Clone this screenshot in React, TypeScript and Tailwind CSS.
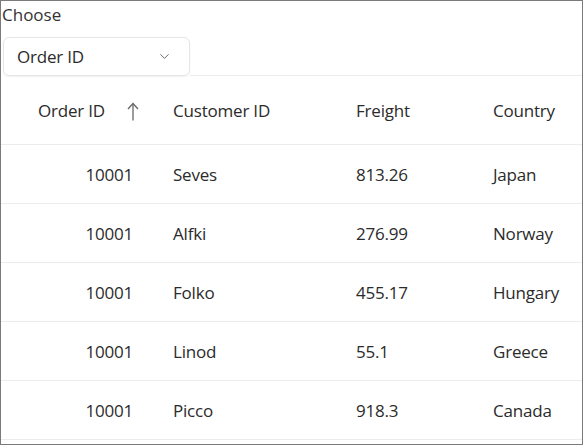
import { ChevronDown } from "lucide-react";

const rows = [
  { id: "10001", customer: "Seves", freight: "813.26", country: "Japan" },
  { id: "10001", customer: "Alfki", freight: "276.99", country: "Norway" },
  { id: "10001", customer: "Folko", freight: "455.17", country: "Hungary" },
  { id: "10001", customer: "Linod", freight: "55.1", country: "Greece" },
  { id: "10001", customer: "Picco", freight: "918.3", country: "Canada" },
];

const cols = "grid grid-cols-[155px_183px_137px_1fr]";

const App = () => {
  return (
    <div
      className="w-[583px] h-[445px] bg-white border border-[#7a7a7a] overflow-hidden text-[#2b2b2b]"
      style={{ fontFamily: '"Segoe UI", "Open Sans", sans-serif' }}
    >
      <div className="pl-[1px] pt-[2px] text-[17px] leading-[24px] text-[#333]">Choose</div>
      <div className="flex items-end">
        <div className="ml-[2px] mt-[10px] w-[187px] h-[39px] flex items-center justify-between pl-[13px] pr-[17px] border border-[#e5e5e5] rounded-md shadow-[0_1px_2px_rgba(0,0,0,0.06)]">
          <span className="text-[17px] tracking-[-0.2px]">Order ID</span>
          <ChevronDown size={15} strokeWidth={1.4} className="text-[#555]" />
        </div>
        <div className="flex-1 border-b border-[#ececec]" />
      </div>

      <div className={`${cols} h-[69px] items-center pt-[2px] border-b border-[#ececec] text-[17px] tracking-[-0.2px]`}>
        <div className="flex items-center justify-end pr-[17px]">
          <span>Order ID</span>
          <svg width="12" height="19" viewBox="0 0 12 19" className="ml-[22px] text-[#666]" fill="none" stroke="currentColor" strokeWidth="1.3">
            <path d="M6 1.5V18.5" />
            <path d="M1 7L6 1.5L11 7" />
          </svg>
        </div>
        <div className="pl-[17px]">Customer ID</div>
        <div className="pl-[17px]">Freight</div>
        <div className="pl-[17px]">Country</div>
      </div>

      {rows.map((r, i) => (
        <div key={i} className={`${cols} h-[59px] items-center pt-[2px] border-b border-[#ececec] text-[17px] tracking-[-0.2px]`}>
          <div className="text-right pr-[23px]">{r.id}</div>
          <div className="pl-[17px]">{r.customer}</div>
          <div className="pl-[17px]">{r.freight}</div>
          <div className="pl-[17px]">{r.country}</div>
        </div>
      ))}
    </div>
  );
};

export default App;
